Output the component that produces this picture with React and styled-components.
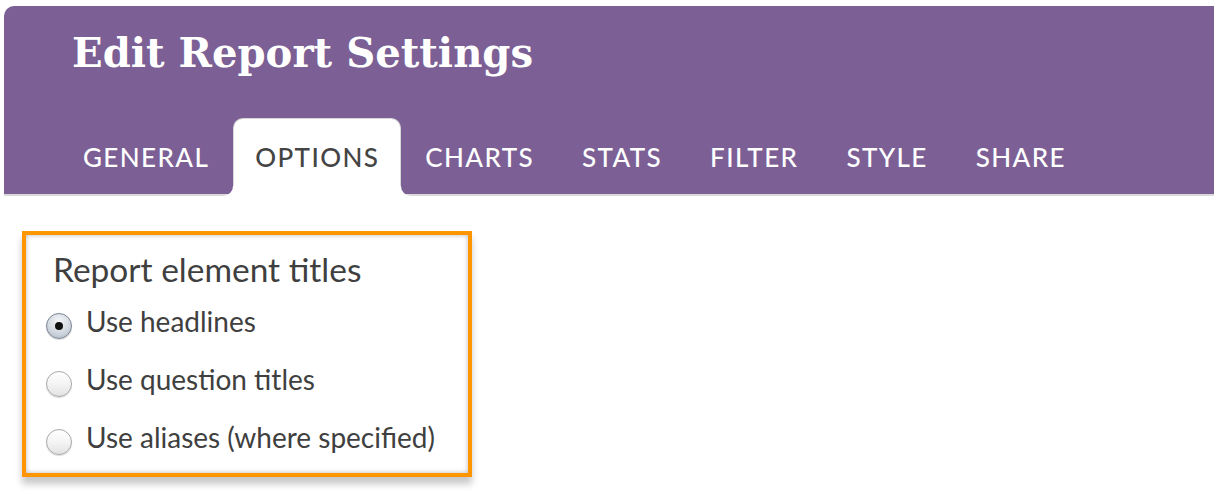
import React from "react";
import styled, { createGlobalStyle } from "styled-components";

const Global = createGlobalStyle`
  html, body { margin: 0; padding: 0; background: #ffffff; }
  body { font-family: Lato, "Liberation Sans", sans-serif; }
`;

const Page = styled.div`
  width: 1214px;
  height: 498px;
  padding: 6px 0 0 4px;
  box-sizing: border-box;
  overflow: hidden;
`;

const Header = styled.header`
  background: #7b5f95;
  border-top-left-radius: 10px;
  border-bottom: 2px solid #dadada;
  padding: 26px 0 0 55px;
  display: flex;
  flex-direction: column;
`;

const Title = styled.h1`
  margin: 0 0 0 13px;
  font-family: "DejaVu Serif", "Liberation Serif", serif;
  font-weight: 700;
  font-size: 40.2px;
  line-height: 42px;
  color: #ffffff;
  letter-spacing: 0;
`;

const TabBar = styled.nav`
  display: flex;
  align-items: flex-end;
  margin-top: 44px;
  margin-bottom: -2px;
`;

const Tab = styled.div`
  position: relative;
  box-sizing: border-box;
  height: 78px;
  padding: 0 ${(p) => (p.$active ? 21 : 23)}px 2px ${(p) => (p.$active ? 21 : 23)}px;
  display: flex;
  align-items: center;
  font-family: Lato, "Liberation Sans", sans-serif;
  font-size: 26px;
  font-weight: 500;
  letter-spacing: 1.4px;
  text-transform: uppercase;
  color: ${(p) => (p.$active ? "#444444" : "#ffffff")};
  background: ${(p) => (p.$active ? "#ffffff" : "transparent")};
  border: ${(p) => (p.$active ? "1px solid #d8d8d8" : "1px solid transparent")};
  border-bottom: none;
  border-radius: 10px 10px 0 0;

  ${(p) =>
    p.$active &&
    `
    &::before, &::after {
      content: "";
      position: absolute;
      bottom: 0;
      width: 10px;
      height: 10px;
      background: transparent;
    }
    &::before {
      left: -11px;
      border-bottom-right-radius: 10px;
      box-shadow: 4px 4px 0 4px #ffffff;
    }
    &::after {
      right: -11px;
      border-bottom-left-radius: 10px;
      box-shadow: -4px 4px 0 4px #ffffff;
    }
  `}
`;

const Content = styled.main`
  padding: 35px 0 0 18px;
`;

const Panel = styled.section`
  width: 450px;
  height: 246px;
  box-sizing: border-box;
  border: 4px solid #ff9500;
  background: #ffffff;
  box-shadow: inset 0 0 5px rgba(0, 0, 0, 0.28), 0 7px 7px rgba(0, 0, 0, 0.22);
  padding: 15px 0 0 27px;
  display: flex;
  flex-direction: column;
`;

const Heading = styled.h2`
  margin: 0 0 14px 0;
  font-family: Lato, "Liberation Sans", sans-serif;
  font-weight: 400;
  font-size: 33.5px;
  line-height: 38px;
  color: #3f3f3f;
`;

const OptionList = styled.div`
  display: flex;
  flex-direction: column;
  gap: 20px;
`;

const Option = styled.label`
  display: flex;
  align-items: center;
  gap: 14px;
  margin-left: -7px;
  font-family: Lato, "Liberation Sans", sans-serif;
  font-size: 28px;
  line-height: 38px;
  color: #3f3f3f;
`;

const Radio = styled.span`
  position: relative;
  width: 26px;
  height: 26px;
  flex: none;
  border-radius: 50%;
  box-sizing: border-box;
  border: 1px solid ${(p) => (p.$checked ? "#7b8592" : "#a8a8a8")};
  margin-top: 10px;
  background: ${(p) =>
    p.$checked
      ? "radial-gradient(circle at 50% 30%, #f4f6f9 0%, #d3d9e1 55%, #aab4c1 100%)"
      : "linear-gradient(#ffffff 0%, #f4f4f4 50%, #e2e2e2 100%)"};
  box-shadow: 0 1px 1px rgba(0, 0, 0, 0.15);

  ${(p) =>
    p.$checked &&
    `
    &::after {
      content: "";
      position: absolute;
      left: 50%;
      top: 50%;
      width: 8px;
      height: 8px;
      margin: -4px 0 0 -4px;
      border-radius: 50%;
      background: #111111;
    }
  `}
`;

const tabs = ["General", "Options", "Charts", "Stats", "Filter", "Style", "Share"];
const options = [
  { label: "Use headlines", checked: true },
  { label: "Use question titles", checked: false },
  { label: "Use aliases (where specified)", checked: false },
];

export default function App() {
  return (
    <Page>
      <Global />
      <Header>
        <Title>Edit Report Settings</Title>
        <TabBar>
          {tabs.map((t) => (
            <Tab key={t} $active={t === "Options"}>
              {t}
            </Tab>
          ))}
        </TabBar>
      </Header>
      <Content>
        <Panel>
          <Heading>Report element titles</Heading>
          <OptionList>
            {options.map((o) => (
              <Option key={o.label}>
                <Radio $checked={o.checked} />
                {o.label}
              </Option>
            ))}
          </OptionList>
        </Panel>
      </Content>
    </Page>
  );
}
